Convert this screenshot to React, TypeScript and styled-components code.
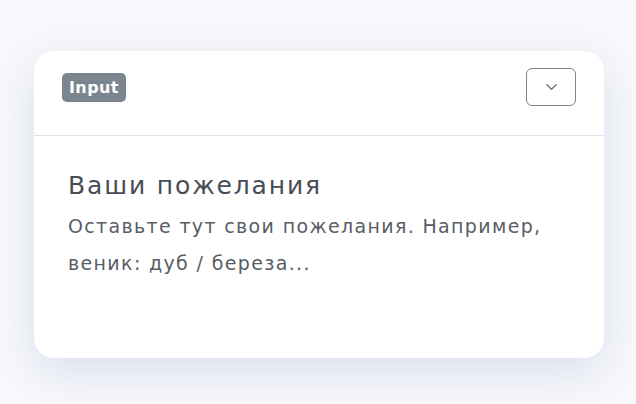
import React from 'react';
import styled, {createGlobalStyle} from 'styled-components';

const GlobalStyle = createGlobalStyle`
  html, body {
    margin: 0;
    padding: 0;
    background: #f8f9fc;
  }
  body {
    font-family: 'DejaVu Sans', 'Open Sans', sans-serif;
  }
`;

const Page = styled.div`
  padding: 51px 32px 46px 34px;
`;

const Card = styled.section`
  width: 570px;
  height: 307px;
  background: #ffffff;
  border-radius: 20px;
  box-shadow: 0 14px 48px rgba(70, 90, 160, 0.17);
  overflow: hidden;
`;

const Header = styled.header`
  display: flex;
  align-items: center;
  justify-content: space-between;
  padding: 17px 28px 29px;
  border-bottom: 1px solid #e3e3e5;
`;

const Badge = styled.span`
  display: inline-flex;
  align-items: center;
  height: 29px;
  padding: 0 7px;
  border-radius: 5px;
  background: #7b8590;
  color: #ffffff;
  font-size: 16px;
  font-weight: 700;
  letter-spacing: 0.4px;
`;

const ToggleButton = styled.button`
  display: flex;
  align-items: center;
  justify-content: center;
  width: 50px;
  height: 38px;
  padding: 0;
  background: #ffffff;
  border: 1px solid #7b8590;
  border-radius: 6px;
  color: #6d7681;
  cursor: pointer;
`;

const Body = styled.div`
  padding: 34px 34px;
`;

const Title = styled.h2`
  margin: 0 0 6px;
  font-size: 25px;
  font-weight: 400;
  letter-spacing: 1.85px;
  line-height: 32px;
  color: #484d55;
`;

const Hint = styled.p`
  margin: 0;
  font-size: 19px;
  letter-spacing: 1.35px;
  line-height: 37px;
  color: #585d65;
`;

const Chevron = () => (
  <svg width="13" height="8" viewBox="0 0 13 8" fill="none">
    <path d="M1.8 1.8L6.5 6.3l4.7-4.5" stroke="currentColor" strokeWidth="1.4" strokeLinecap="round" strokeLinejoin="round" />
  </svg>
);

export default function App() {
  return (
    <Page>
      <GlobalStyle />
      <Card>
        <Header>
          <Badge>Input</Badge>
          <ToggleButton aria-label="Развернуть">
            <Chevron />
          </ToggleButton>
        </Header>
        <Body>
          <Title>Ваши пожелания</Title>
          <Hint>
            Оставьте тут свои пожелания. Например,
            <br />
            веник: дуб / береза...
          </Hint>
        </Body>
      </Card>
    </Page>
  );
}
